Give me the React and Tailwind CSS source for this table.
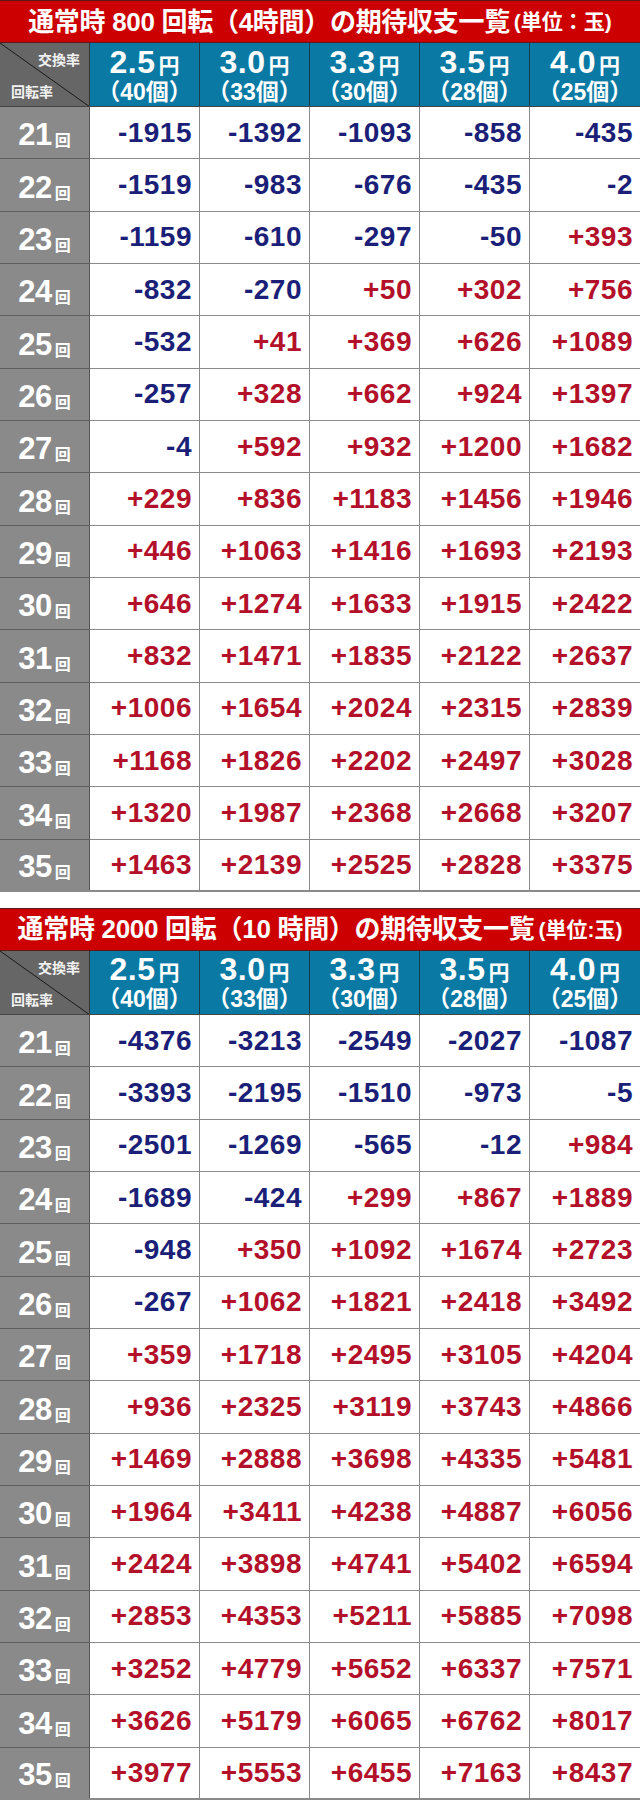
import React from "react";

const cols = [
  ["2.5", "40"],
  ["3.0", "33"],
  ["3.3", "30"],
  ["3.5", "28"],
  ["4.0", "25"],
];

const t1 = [
  ["-1915", "-1392", "-1093", "-858", "-435"],
  ["-1519", "-983", "-676", "-435", "-2"],
  ["-1159", "-610", "-297", "-50", "+393"],
  ["-832", "-270", "+50", "+302", "+756"],
  ["-532", "+41", "+369", "+626", "+1089"],
  ["-257", "+328", "+662", "+924", "+1397"],
  ["-4", "+592", "+932", "+1200", "+1682"],
  ["+229", "+836", "+1183", "+1456", "+1946"],
  ["+446", "+1063", "+1416", "+1693", "+2193"],
  ["+646", "+1274", "+1633", "+1915", "+2422"],
  ["+832", "+1471", "+1835", "+2122", "+2637"],
  ["+1006", "+1654", "+2024", "+2315", "+2839"],
  ["+1168", "+1826", "+2202", "+2497", "+3028"],
  ["+1320", "+1987", "+2368", "+2668", "+3207"],
  ["+1463", "+2139", "+2525", "+2828", "+3375"],
];

const t2 = [
  ["-4376", "-3213", "-2549", "-2027", "-1087"],
  ["-3393", "-2195", "-1510", "-973", "-5"],
  ["-2501", "-1269", "-565", "-12", "+984"],
  ["-1689", "-424", "+299", "+867", "+1889"],
  ["-948", "+350", "+1092", "+1674", "+2723"],
  ["-267", "+1062", "+1821", "+2418", "+3492"],
  ["+359", "+1718", "+2495", "+3105", "+4204"],
  ["+936", "+2325", "+3119", "+3743", "+4866"],
  ["+1469", "+2888", "+3698", "+4335", "+5481"],
  ["+1964", "+3411", "+4238", "+4887", "+6056"],
  ["+2424", "+3898", "+4741", "+5402", "+6594"],
  ["+2853", "+4353", "+5211", "+5885", "+7098"],
  ["+3252", "+4779", "+5652", "+6337", "+7571"],
  ["+3626", "+5179", "+6065", "+6762", "+8017"],
  ["+3977", "+5553", "+6455", "+7163", "+8437"],
];

const FONT = {
  fontFamily: '"Liberation Sans", Arial, "Noto Sans CJK JP", sans-serif',
};

function Title({ main, unit }) {
  return (
    <div className="h-[43px] bg-[#cc0000] border-t border-b border-[#5a1a1a] flex items-center justify-center text-white font-bold whitespace-nowrap">
      <span className="text-[26px] tracking-[-0.3px] leading-none">{main}</span>
      <span className="text-[21px] ml-[4px] leading-none">{unit}</span>
    </div>
  );
}

function Header() {
  return (
    <div className="flex h-[64px] border-b border-[#444]">
      <div className="relative w-[90px] shrink-0 bg-[#666666] border-r border-[#333] overflow-hidden">
        <svg className="absolute inset-0" width="90" height="64" viewBox="0 0 90 64">
          <line x1="0" y1="0" x2="90" y2="64" stroke="#1a1a1a" strokeWidth="1" />
        </svg>
        <div className="absolute right-[9px] top-[10px] text-[14px] font-bold text-[#f2f2f2] leading-none">
          交換率
        </div>
        <div className="absolute left-[11px] bottom-[7px] text-[14px] font-bold text-[#f2f2f2] leading-none">
          回転率
        </div>
      </div>
      {cols.map(([rate, n], i) => (
        <div
          key={i}
          className={`w-[110px] shrink-0 bg-[#0a7aa5] flex flex-col items-center justify-center text-white font-bold ${
            i < 4 ? "border-r border-[#1d3a4a]" : ""
          }`}
        >
          <div className="flex items-baseline leading-none">
            <span className="text-[32px] tracking-[0.5px]">{rate}</span>
            <span className="text-[21px] ml-[3px]">円</span>
          </div>
          <div className="text-[23px] leading-none mt-[3px] whitespace-nowrap">
            （{n}個）
          </div>
        </div>
      ))}
    </div>
  );
}

function Row({ label, vals, last }) {
  return (
    <div className={`flex h-[52.33px] ${last ? "border-b-2 border-[#8a8a8a]" : "border-b border-[#8a8a8a]"}`}>
      <div
        className={`w-[90px] shrink-0 bg-[#8a8a8a] border-r border-[#555] flex items-end justify-center pb-[8px] text-white font-bold ${
          last ? "" : "shadow-[0_1px_0_#5e5e5e]"
        }`}
      >
        <span className="text-[31px] leading-none tracking-[-0.5px]">{label}</span>
        <span className="text-[16px] leading-none ml-[3px] mb-[1px]">回</span>
      </div>
      {vals.map((v, i) => (
        <div
          key={i}
          className={`w-[110px] shrink-0 bg-white flex items-center justify-end pr-[7px] ${
            i < 4 ? "border-r border-[#8a8a8a]" : ""
          }`}
        >
          <span
            className={`text-[28px] font-bold leading-none tracking-[0.5px] ${
              v.startsWith("-") ? "text-[#1b1f78]" : "text-[#b3102a]"
            }`}
          >
            {v}
          </span>
        </div>
      ))}
    </div>
  );
}

function Table({ main, unit, data }) {
  return (
    <div className="w-[640px]">
      <Title main={main} unit={unit} />
      <Header />
      {data.map((vals, i) => (
        <Row key={i} label={21 + i} vals={vals} last={i === data.length - 1} />
      ))}
    </div>
  );
}

export default function App() {
  return (
    <div className="w-[640px] h-[1816px] bg-white" style={FONT}>
      <Table main="通常時 800 回転（4時間）の期待収支一覧" unit="(単位：玉)" data={t1} />
      <div className="h-[16px]" />
      <Table main="通常時 2000 回転（10 時間）の期待収支一覧" unit="(単位:玉)" data={t2} />
    </div>
  );
}
